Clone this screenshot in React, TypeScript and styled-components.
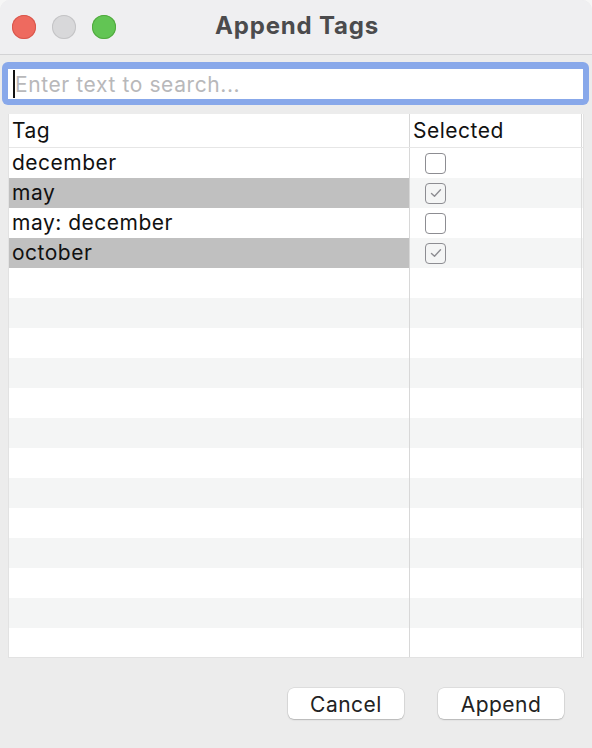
import React from "react";
import styled, { createGlobalStyle } from "styled-components";

const GlobalStyle = createGlobalStyle`
  html, body { margin: 0; padding: 0; background: #f6f6f6; }
  body { font-family: Inter, "Noto Sans", "Liberation Sans", sans-serif; }
  * { box-sizing: border-box; }
`;

const Window = styled.div`
  width: 592px;
  height: 748px;
  background: #ececec;
  border-top-left-radius: 10px;
  border-top-right-radius: 10px;
  overflow: hidden;
  display: flex;
  flex-direction: column;
`;

const TitleBar = styled.div`
  height: 55px;
  flex: none;
  background: #efeff1;
  border-bottom: 1px solid #d3d3d5;
  display: grid;
  grid-template-columns: 1fr auto 1fr;
  align-items: center;
  padding: 0 12px;
`;

const Lights = styled.div`
  display: flex;
  gap: 16px;
`;

const Light = styled.div<{ $c: string; $b: string }>`
  width: 24px;
  height: 24px;
  border-radius: 50%;
  background: ${(p) => p.$c};
  box-shadow: inset 0 0 0 1px ${(p) => p.$b};
`;

const Title = styled.div`
  font-size: 24px;
  font-weight: 700;
  color: #4b4b4d;
  letter-spacing: 0.8px;
  margin-top: -4px;
  margin-left: 2px;
`;

const Body = styled.div`
  flex: 1;
  display: flex;
  flex-direction: column;
  padding: 7px 0 0 0;
`;

const SearchRing = styled.div`
  margin: 0 3px 0 2px;
  padding: 7px 6px 6px 6px;
  height: 43px;
  background: #88a8ea;
  border-radius: 6px;
  display: flex;
`;

const SearchInput = styled.div`
  flex: 1;
  height: 30px;
  background: #ffffff;
  display: flex;
  align-items: center;
  padding-left: 5px;
  font-size: 21px;
  color: #b8b8ba;
  letter-spacing: 0.6px;
`;

const Caret = styled.span`
  display: inline-block;
  width: 2px;
  height: 28px;
  background: #111;
`;

const Table = styled.div`
  margin: 9px 8px 0 8px;
  width: 576px;
  height: 544px;
  background: #ffffff;
  border: 1px solid #e2e2e2;
  border-top: none;
  display: flex;
  flex-direction: column;
  overflow: hidden;
`;

const HeaderRow = styled.div`
  height: 34px;
  flex: none;
  display: grid;
  grid-template-columns: 401px 172px 3px;
  border-bottom: 1px solid #e6e6e6;
`;

const HeaderCell = styled.div<{ $divider?: boolean }>`
  font-size: 21px;
  color: #111;
  line-height: 33px;
  padding-left: 3px;
  letter-spacing: 0.5px;
  border-right: ${(p) => (p.$divider ? "1px solid #d8d8d8" : "none")};
`;

const Rows = styled.div`
  flex: 1;
`;

const Row = styled.div<{ $stripe: boolean }>`
  height: 30px;
  display: grid;
  grid-template-columns: 401px 172px 3px;
  background: ${(p) => (p.$stripe ? "#f4f5f5" : "#ffffff")};
`;

const TagCell = styled.div<{ $selected: boolean }>`
  font-size: 21px;
  line-height: 30px;
  color: #111;
  padding-left: 3px;
  letter-spacing: 0.5px;
  background: ${(p) => (p.$selected ? "#c0c0c0" : "transparent")};
  border-right: 1px solid #d8d8d8;
`;

const CheckCell = styled.div`
  display: flex;
  align-items: center;
  padding-left: 15px;
  border-right: 1px solid #dcdcdc;
`;

const Box = styled.div`
  width: 21px;
  height: 21px;
  border: 1.5px solid #8d8d92;
  border-radius: 4px;
  display: flex;
  align-items: center;
  justify-content: center;
`;

const Footer = styled.div`
  display: flex;
  justify-content: flex-end;
  gap: 34px;
  padding: 30px 28px 0 0;
`;

const Button = styled.button<{ $w: number }>`
  width: ${(p) => p.$w}px;
  height: 31px;
  background: #ffffff;
  border: none;
  border-radius: 6px;
  box-shadow: 0 0 0 0.5px rgba(0, 0, 0, 0.12), 0 1px 1.5px rgba(0, 0, 0, 0.18);
  font-family: Inter, "Noto Sans", "Liberation Sans", sans-serif;
  font-size: 21px;
  line-height: 31px;
  padding: 1px 0 0 0;
  color: #222;
  letter-spacing: 0.5px;
`;

const tags = [
  { name: "december", selected: false },
  { name: "may", selected: true },
  { name: "may: december", selected: false },
  { name: "october", selected: true },
];

function Check() {
  return (
    <svg width="14" height="12" viewBox="0 0 14 12">
      <path d="M2.5 6.5 L5.5 9.3 L11.5 2.8" fill="none" stroke="#8d8d92" strokeWidth="1.4" strokeLinecap="round" strokeLinejoin="round" />
    </svg>
  );
}

export default function App() {
  const rows = Array.from({ length: 17 }, (_, i) => tags[i] ?? null);
  return (
    <>
      <GlobalStyle />
      <Window>
        <TitleBar>
          <Lights>
            <Light $c="#ee6a5f" $b="#d8574d" />
            <Light $c="#d8d8da" $b="#c4c4c6" />
            <Light $c="#62c554" $b="#51a93f" />
          </Lights>
          <Title>Append Tags</Title>
          <div />
        </TitleBar>
        <Body>
          <SearchRing>
            <SearchInput>
              <Caret />
              Enter text to search...
            </SearchInput>
          </SearchRing>
          <Table>
            <HeaderRow>
              <HeaderCell $divider>Tag</HeaderCell>
              <HeaderCell $divider>Selected</HeaderCell>
              <div />
            </HeaderRow>
            <Rows>
              {rows.map((t, i) => (
                <Row key={i} $stripe={i % 2 === 1}>
                  <TagCell $selected={!!t?.selected}>{t?.name ?? ""}</TagCell>
                  <CheckCell>{t && <Box>{t.selected && <Check />}</Box>}</CheckCell>
                  <div />
                </Row>
              ))}
            </Rows>
          </Table>
          <Footer>
            <Button $w={116}>Cancel</Button>
            <Button $w={126}>Append</Button>
          </Footer>
        </Body>
      </Window>
    </>
  );
}
